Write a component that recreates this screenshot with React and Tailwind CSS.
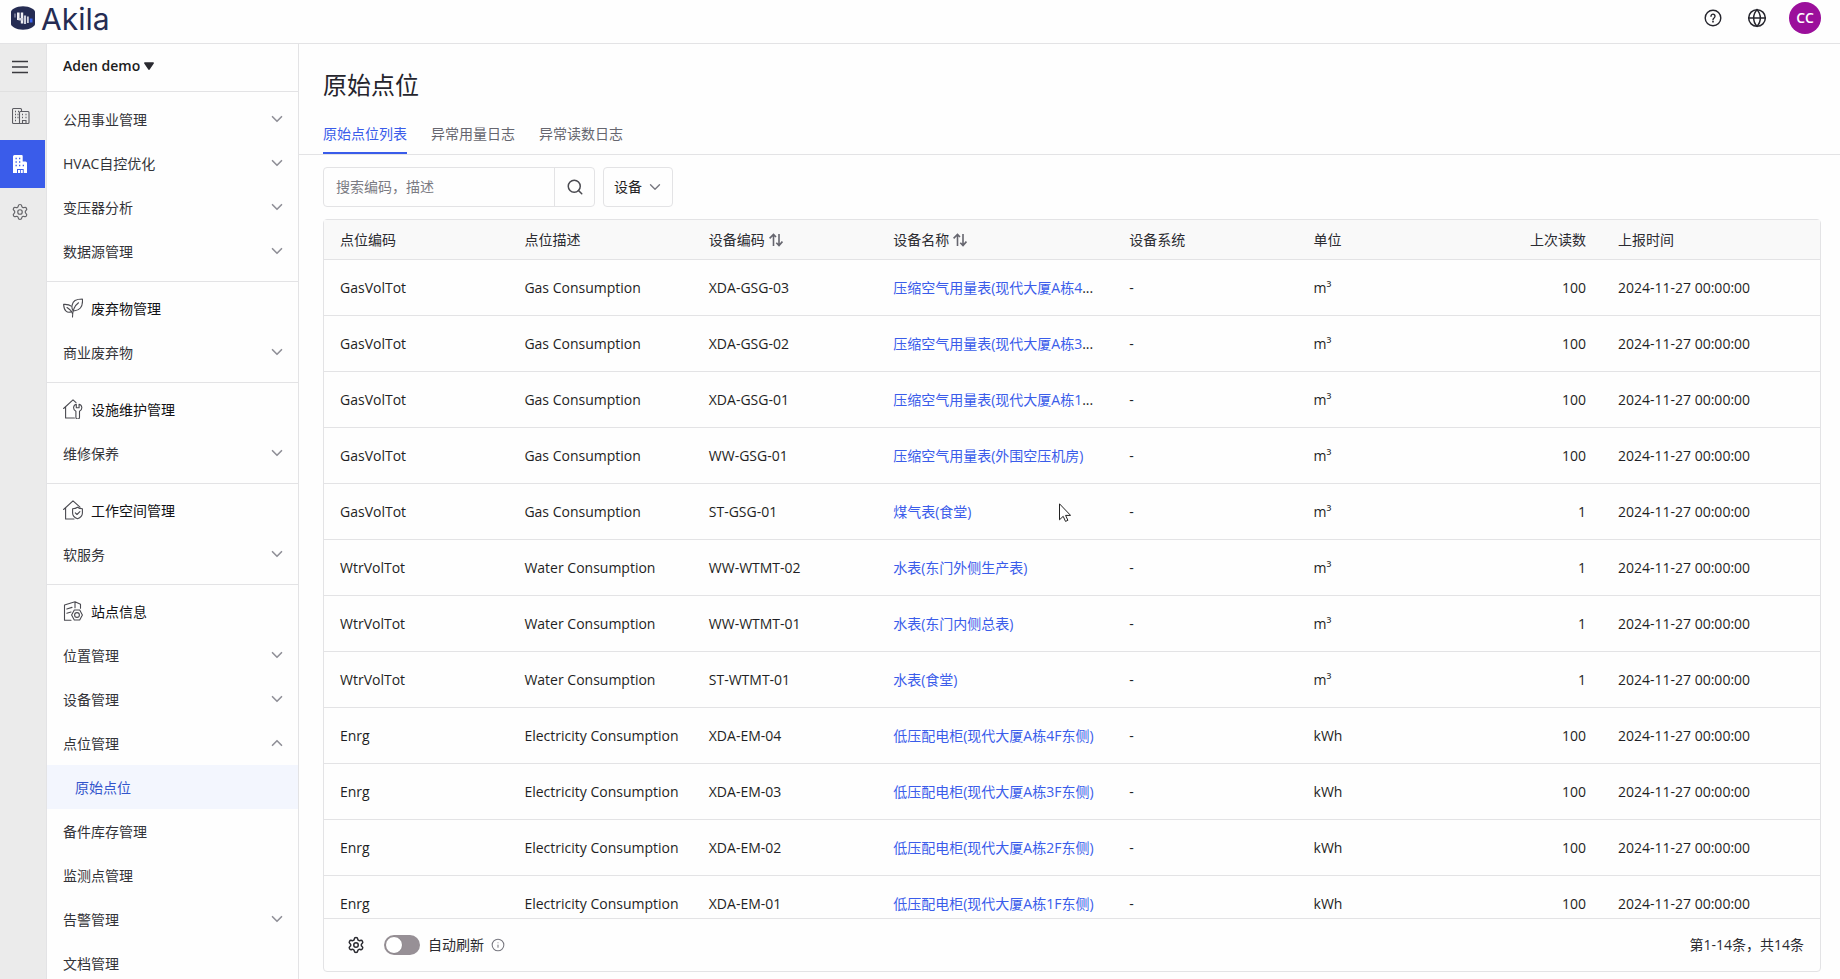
import { useState } from "react";
import { ChevronDown, ChevronUp, Globe, Info, Search, Settings } from "lucide-react";

const utilities = [
  { label: "公用事业管理", expandable: true },
  { label: "HVAC自控优化", expandable: true },
  { label: "变压器分析", expandable: true },
  { label: "数据源管理", expandable: true },
];

const sections = [
  { items: utilities },
  { title: "废弃物管理", icon: LeafIcon, items: [{ label: "商业废弃物", expandable: true }] },
  { title: "设施维护管理", icon: HouseWrenchIcon, items: [{ label: "维修保养", expandable: true }] },
  { title: "工作空间管理", icon: HouseShieldIcon, items: [{ label: "软服务", expandable: true }] },
  {
    title: "站点信息",
    icon: SiteIcon,
    items: [
      { label: "位置管理", expandable: true },
      { label: "设备管理", expandable: true },
      { label: "点位管理", expandable: true, open: true, children: ["原始点位"] },
      { label: "备件库存管理" },
      { label: "监测点管理" },
      { label: "告警管理", expandable: true },
      { label: "文档管理" },
    ],
  },
];

const tabs = ["原始点位列表", "异常用量日志", "异常读数日志"];

const REPORTED_AT = "2024-11-27 00:00:00";

const rows = [
  { code: "GasVolTot", desc: "Gas Consumption", device: "XDA-GSG-03", name: "压缩空气用量表(现代大厦A栋4", cut: true, unit: "m³", value: 100 },
  { code: "GasVolTot", desc: "Gas Consumption", device: "XDA-GSG-02", name: "压缩空气用量表(现代大厦A栋3", cut: true, unit: "m³", value: 100 },
  { code: "GasVolTot", desc: "Gas Consumption", device: "XDA-GSG-01", name: "压缩空气用量表(现代大厦A栋1", cut: true, unit: "m³", value: 100 },
  { code: "GasVolTot", desc: "Gas Consumption", device: "WW-GSG-01", name: "压缩空气用量表(外围空压机房)", unit: "m³", value: 100 },
  { code: "GasVolTot", desc: "Gas Consumption", device: "ST-GSG-01", name: "煤气表(食堂)", unit: "m³", value: 1 },
  { code: "WtrVolTot", desc: "Water Consumption", device: "WW-WTMT-02", name: "水表(东门外侧生产表)", unit: "m³", value: 1 },
  { code: "WtrVolTot", desc: "Water Consumption", device: "WW-WTMT-01", name: "水表(东门内侧总表)", unit: "m³", value: 1 },
  { code: "WtrVolTot", desc: "Water Consumption", device: "ST-WTMT-01", name: "水表(食堂)", unit: "m³", value: 1 },
  { code: "Enrg", desc: "Electricity Consumption", device: "XDA-EM-04", name: "低压配电柜(现代大厦A栋4F东侧)", unit: "kWh", value: 100 },
  { code: "Enrg", desc: "Electricity Consumption", device: "XDA-EM-03", name: "低压配电柜(现代大厦A栋3F东侧)", unit: "kWh", value: 100 },
  { code: "Enrg", desc: "Electricity Consumption", device: "XDA-EM-02", name: "低压配电柜(现代大厦A栋2F东侧)", unit: "kWh", value: 100 },
  { code: "Enrg", desc: "Electricity Consumption", device: "XDA-EM-01", name: "低压配电柜(现代大厦A栋1F东侧)", unit: "kWh", value: 100 },
];

function LogoMark() {
  return (
    <svg viewBox="0 0 24 24" className="h-6 w-6" aria-hidden="true">
      <path d="M3 2.6C8 -.4 16 -.4 21 2.6 23 3.8 24 4.6 24 6v12c0 1.4-1 2.200-3 3.400-5 3-13 3-18 0C1 20.200 0 19.400 0 18V6c0-1.400 1-2.200 3-3.400z" fill="#252c53" />
      <path d="M3 7.500h2v4H3z" fill="#6f7391" />
      <path d="M6 6.500h2.600v7.500H6zM9.800 6.500h2.400v11H9.800z" fill="#f1f1f5" />
      <path d="M7.500 12h4.700v2.500H7.500zM12.900 9.500h2.200v8.500h-2.200zM16 10.500h1.800v6.500H16z" fill="#cfd1dc" />
      <path d="M18.800 12.500h2.700v4h-2.700z" fill="#3b62f0" />
    </svg>
  );
}

function HelpIcon() {
  return (
    <svg viewBox="0 0 18 18" className="h-[18px] w-[18px]" fill="none" stroke="#25252d" strokeWidth="1.400" aria-hidden="true">
      <circle cx="9" cy="9" r="7.800" />
      <path d="M7 7.200a2 2 0 1 1 3.300 1.500c-.8.6-1.300 1-1.300 2" strokeLinecap="round" />
      <circle cx="9" cy="12.700" r=".9" fill="#25252d" stroke="none" />
    </svg>
  );
}

function MenuIcon() {
  return (
    <svg viewBox="0 0 16 14" className="h-[14px] w-4" stroke="#3a3a3f" strokeWidth="1.400" aria-hidden="true">
      <path d="M0 1.500h16M0 7h16M0 12.500h16" />
    </svg>
  );
}

function BuildingsIcon() {
  return (
    <svg viewBox="0 0 18 18" className="h-[18px] w-[18px]" fill="none" stroke="#5c5c62" strokeWidth="1.100" aria-hidden="true">
      <path d="M7.500 16.500h-6a1 1 0 0 1-1-1v-13a1 1 0 0 1 1-1h7a1 1 0 0 1 1 1v1.500" />
      <path d="M7.500 16.500v-11a1 1 0 0 1 1-1h7.500a1 1 0 0 1 1 1v10a1 1 0 0 1-1 1zM10.500 16.500v-3h3.500v3" />
      <path d="M3 4.500h1M6 4.500h1M3 7.500h1M3 10.500h1M3 13.500h1M5.500 7.500h1M5.500 10.500h1M10 7.500h1M13.500 7.500h1M10 10.500h1M13.500 10.500h1" strokeWidth="1.300" />
    </svg>
  );
}

function BuildingSolidIcon() {
  return (
    <svg viewBox="0 0 14 18" className="h-[18px] w-[14px]" aria-hidden="true">
      <path d="M1.500 0h7.200a1 1 0 0 1 1 1v5.500h2.800A1.500 1.500 0 0 1 14 8v10h-3.300v-4H4v4H0V1.500A1.500 1.500 0 0 1 1.500 0z" fill="#fff" />
      <path d="M5 15h2v3H5zM7.800 15h2v3h-2z" fill="#fff" />
      <path d="M2.500 3.500h1.300M6 3.500h1.300M2.500 7h1.300M6 7h1.300M2.500 10.500h1.300M6 10.500h1.300M9.700 10.500H11" stroke="#3a5cea" strokeWidth="1.300" />
    </svg>
  );
}

function LeafIcon() {
  return (
    <svg viewBox="0 0 20 20" className="h-5 w-5" fill="none" stroke="#4a4a50" strokeWidth="1.100" strokeLinecap="round" strokeLinejoin="round" aria-hidden="true">
      <path d="M10 12.500C8 9.500 9 4.500 12 2.500 14.500 1 17.500 1 19.400 1c.3 3 .1 6.500-2 9-1.900 2.200-4.900 3-7.400 2.500z" />
      <path d="M15.500 4.800C12.500 7 9.500 11.500 9.500 19" />
      <path d="M8.200 8.200C6.400 6.600 3.500 6.200.6 6.400c.2 2.600.6 5 2.200 6.500 1.500 1.400 4 1.600 5.800.6" />
      <path d="M4 9.500c2.500 1.500 4.700 3.500 5.500 6" />
    </svg>
  );
}

function HouseWrenchIcon() {
  return (
    <svg viewBox="0 0 20 20" className="h-5 w-5" fill="none" stroke="#4a4a50" strokeWidth="1.100" strokeLinecap="round" strokeLinejoin="round" aria-hidden="true">
      <path d="M.6 9.500 10 .8l3 2.800M2.600 8v11h8.800" />
      <path d="M13.300 5.200a3.700 3.700 0 0 0-.4 7v6a1.700 1.700 0 0 0 3.600 0v-6a3.700 3.700 0 0 0-.4-7v3.600h-2.800z" />
    </svg>
  );
}

function HouseShieldIcon() {
  return (
    <svg viewBox="0 0 20 20" className="h-5 w-5" fill="none" stroke="#4a4a50" strokeWidth="1.100" strokeLinecap="round" strokeLinejoin="round" aria-hidden="true">
      <path d="M.6 9.500 10 .8l7 6.400M2.600 8v11h8.400" />
      <path d="M14.500 7.200c1.500 1.200 3 1.600 4.900 1.600v4.200c0 2.700-2 4.700-4.900 5.800-2.900-1.100-4.900-3.100-4.900-5.800V8.800c1.900 0 3.400-.4 4.900-1.600z" />
      <path d="m12.300 12.800 1.700 1.700 2.900-2.900" />
    </svg>
  );
}

function SiteIcon() {
  return (
    <svg viewBox="0 0 20 20" className="h-5 w-5" fill="none" stroke="#4a4a50" strokeWidth="1.100" strokeLinecap="round" strokeLinejoin="round" aria-hidden="true">
      <path d="M8 19.300H1.500V4L12 .8l5.500 2.400v4M12 .8v6M3.800 8l5.200-1.600M3.800 12.200 8 11" />
      <path d="m11.300 9-2.700 5 2.700 5h5.400l2.700-5-2.700-5z" />
      <circle cx="14" cy="14" r="2.400" />
    </svg>
  );
}

function SortIcon() {
  return (
    <svg viewBox="0 0 14 14" className="h-[14px] w-[14px]" fill="none" stroke="#66666f" strokeWidth="1.600" aria-hidden="true">
      <path d="M4.500 13V1.800M.6 5.400l3.900-4 2.500 2.600M10 1v11.200M13.400 8.600 10 12.600 7.300 9.800" />
    </svg>
  );
}

function PointerIcon() {
  return (
    <svg viewBox="0 0 12 19" className="h-[19px] w-3" aria-hidden="true">
      <path d="M.5.800v16l3.700-3.500 2.300 5.100 2.400-1.100-2.300-4.900h5z" fill="#fff" stroke="#222" />
    </svg>
  );
}

function NavItem({ item }) {
  const [open, setOpen] = useState(Boolean(item.open));
  const Chevron = open ? ChevronUp : ChevronDown;

  return (
    <li>
      <button
        type="button"
        onClick={() => item.expandable && setOpen(!open)}
        className="flex h-11 w-full items-center justify-between pr-3 pl-4 text-left text-[#333338]"
      >
        <span className="pt-0.5">{item.label}</span>
        {item.expandable && <Chevron size={18} strokeWidth={2.2} className="text-[#909098]" />}
      </button>
      {open && item.children && (
        <ul>
          {item.children.map((child) => (
            <li key={child}>
              <a href="#" aria-current="page" className="flex h-11 items-center bg-[#f3f6fe] pt-0.5 pl-7 text-[#3355cc]">
                {child}
              </a>
            </li>
          ))}
        </ul>
      )}
    </li>
  );
}

function Sidebar() {
  return (
    <aside className="flex w-[252px] shrink-0 flex-col border-r border-[#e3e3e5]">
      <label className="flex h-12 shrink-0 items-center gap-1 border-b border-[#e3e3e5] px-4 pb-1">
        <select aria-label="项目" className="field-sizing-content appearance-none bg-transparent font-semibold text-[#1c1c20]">
          <option>Aden demo</option>
        </select>
        <svg viewBox="0 0 10 8" className="h-2 w-[10px]" aria-hidden="true">
          <path d="M.8.300h8.400c.6 0 .9.600.6 1.100L5.700 7.500a.8.800 0 0 1-1.400 0L.2 1.400C-.1.900.2.300.8.300z" fill="#2a2a30" />
        </svg>
      </label>
      <nav className="min-h-0 flex-1 overflow-y-auto pt-px [scrollbar-width:none]">
        {sections.map((section, i) => (
          <section key={i} className="border-b border-[#e3e3e5] pt-1 pb-2">
            {section.title && (
              <h2 className="flex h-11 items-center gap-2 px-4 text-[#111114]">
                <section.icon />
                <span className="pt-0.5">{section.title}</span>
              </h2>
            )}
            <ul>
              {section.items.map((item) => (
                <NavItem key={item.label} item={item} />
              ))}
            </ul>
          </section>
        ))}
      </nav>
    </aside>
  );
}

function Rail() {
  return (
    <nav aria-label="模块" className="flex w-[47px] shrink-0 flex-col border-r border-[#e3e3e5] bg-[#ebebeb]">
      <button type="button" aria-label="菜单" className="flex h-12 items-center border-b border-[#e0e0e0] pb-px pl-3">
        <MenuIcon />
      </button>
      <button type="button" aria-label="组合" className="flex h-12 items-center pl-3">
        <BuildingsIcon />
      </button>
      <button type="button" aria-label="站点" className="flex h-12 w-[45px] items-center bg-[#3a5cea] pl-[13px]">
        <BuildingSolidIcon />
      </button>
      <button type="button" aria-label="设置" className="flex h-12 items-center pl-[11px]">
        <Settings size={18} strokeWidth={1.6} className="text-[#66666a]" />
      </button>
    </nav>
  );
}

function PointsTable() {
  return (
    <div className="flex min-h-0 flex-1 flex-col rounded border border-[#e3e3e5]">
      <div className="min-h-0 flex-1 overflow-y-auto [scrollbar-width:none]">
        <table className="w-full table-fixed border-separate border-spacing-0 text-left">
          <colgroup>
            <col />
            <col />
            <col />
            <col className="w-[236px]" />
            <col />
            <col />
            <col className="w-[120px]" />
            <col className="w-[218px]" />
          </colgroup>
          <thead>
            <tr className="h-10 bg-[#f9f9f9] text-[#2b2b31] [&>th]:border-b [&>th]:border-[#e3e3e5] [&>th]:px-4 [&>th]:font-normal">
              <th>点位编码</th>
              <th>点位描述</th>
              <th>
                <button type="button" className="flex items-center gap-1">
                  设备编码
                  <SortIcon />
                </button>
              </th>
              <th>
                <button type="button" className="flex items-center gap-1">
                  设备名称
                  <SortIcon />
                </button>
              </th>
              <th>设备系统</th>
              <th>单位</th>
              <th className="text-right">上次读数</th>
              <th>上报时间</th>
            </tr>
          </thead>
          <tbody>
            {rows.map((row) => (
              <tr key={row.device} className="h-14 [&>td]:border-b [&>td]:border-[#e3e3e5] [&>td]:px-4">
                <td>{row.code}</td>
                <td className="whitespace-nowrap">{row.desc}</td>
                <td>{row.device}</td>
                <td className="whitespace-nowrap">
                  <a href="#" className="text-[#3a5cea]">{row.name}</a>
                  {row.cut && "..."}
                </td>
                <td>-</td>
                <td>{row.unit}</td>
                <td className="text-right">{row.value}</td>
                <td>{REPORTED_AT}</td>
              </tr>
            ))}
          </tbody>
        </table>
      </div>
      <footer className="flex h-[53px] shrink-0 items-center border-t border-[#e3e3e5] pr-4 pl-[23px]">
        <button type="button" aria-label="表格设置">
          <Settings size={18} strokeWidth={2} className="text-[#2b2b31]" />
        </button>
        <label className="ml-[19px] flex items-center gap-2 text-[#2b2b31]">
          <input
            type="checkbox"
            className="h-5 w-9 appearance-none rounded-full bg-[#979096] p-px before:block before:h-[18px] before:w-[18px] before:rounded-full before:border before:border-[#8b858a] before:bg-white checked:bg-[#3a5cea] checked:before:ml-4"
          />
          自动刷新
        </label>
        <Info size={14} strokeWidth={1.8} className="ml-[7px] text-[#77777f]" />
        <p className="ml-auto text-[#2b2b31]">第1-14条，共14条</p>
      </footer>
    </div>
  );
}

export default function App() {
  const [tab, setTab] = useState(tabs[0]);

  return (
    <div className="relative flex h-screen flex-col overflow-hidden bg-[#fefefe] font-['Open_Sans','Noto_Sans_CJK_SC',sans-serif] text-sm text-[#1f1f24]">
      <header className="flex h-11 shrink-0 items-center justify-between border-b border-[#e3e3e5] pr-[19px] pb-[7px] pl-[11px]">
        <a href="#" className="flex items-center gap-[6px] font-['Inter',sans-serif] text-3xl leading-8 text-[#252c53]">
          <LogoMark />
          <span className="pt-0.5">Akila</span>
        </a>
        <div className="flex items-center">
          <button type="button" aria-label="帮助">
            <HelpIcon />
          </button>
          <button type="button" aria-label="语言" className="ml-[25px]">
            <Globe size={20} strokeWidth={1.8} className="text-[#25252d]" />
          </button>
          <button type="button" className="ml-[22px] h-8 w-8 rounded-full bg-[#9b0f9b] font-semibold text-white">
            CC
          </button>
        </div>
      </header>

      <div className="flex min-h-0 flex-1">
        <Rail />
        <Sidebar />

        <main className="flex min-w-0 flex-1 flex-col pt-[25px] pb-[7px]">
          <h1 className="mb-[13px] px-6 text-2xl leading-8 text-[#25252d]">原始点位</h1>
          <div role="tablist" className="flex gap-6 border-b border-[#e3e3e5] px-6">
            {tabs.map((name) => (
              <button
                key={name}
                type="button"
                role="tab"
                aria-selected={tab === name}
                onClick={() => setTab(name)}
                className={
                  tab === name
                    ? "border-b-2 border-[#3a5cea] pt-[10px] pb-2 text-[#3a5cea]"
                    : "border-b-2 border-transparent pt-[10px] pb-2 text-[#66666f]"
                }
              >
                {name}
              </button>
            ))}
          </div>

          <div className="flex min-h-0 flex-1 flex-col gap-3 pt-3 pr-[19px] pl-6">
            <div className="flex gap-2">
              <form className="flex h-10 w-[272px] rounded border border-[#e3e3e5]" onSubmit={(e) => e.preventDefault()}>
                <input
                  type="text"
                  aria-label="搜索"
                  placeholder="搜索编码，描述"
                  className="min-w-0 flex-1 px-3 outline-none placeholder:text-[#7b7b83]"
                />
                <button type="submit" aria-label="搜索" className="flex w-10 items-center justify-center border-l border-[#e3e3e5]">
                  <Search size={18} strokeWidth={2} className="text-[#4a4a50]" />
                </button>
              </form>
              <label className="flex h-10 items-center gap-1 rounded border border-[#e3e3e5] pr-2 pl-[10px]">
                <select aria-label="类型" className="field-sizing-content appearance-none bg-transparent">
                  <option>设备</option>
                </select>
                <ChevronDown size={18} strokeWidth={1.8} className="text-[#77777f]" />
              </label>
            </div>
            <PointsTable />
          </div>
        </main>
      </div>

      <div className="pointer-events-none absolute top-[503px] left-[1059px]">
        <PointerIcon />
      </div>
    </div>
  );
}
